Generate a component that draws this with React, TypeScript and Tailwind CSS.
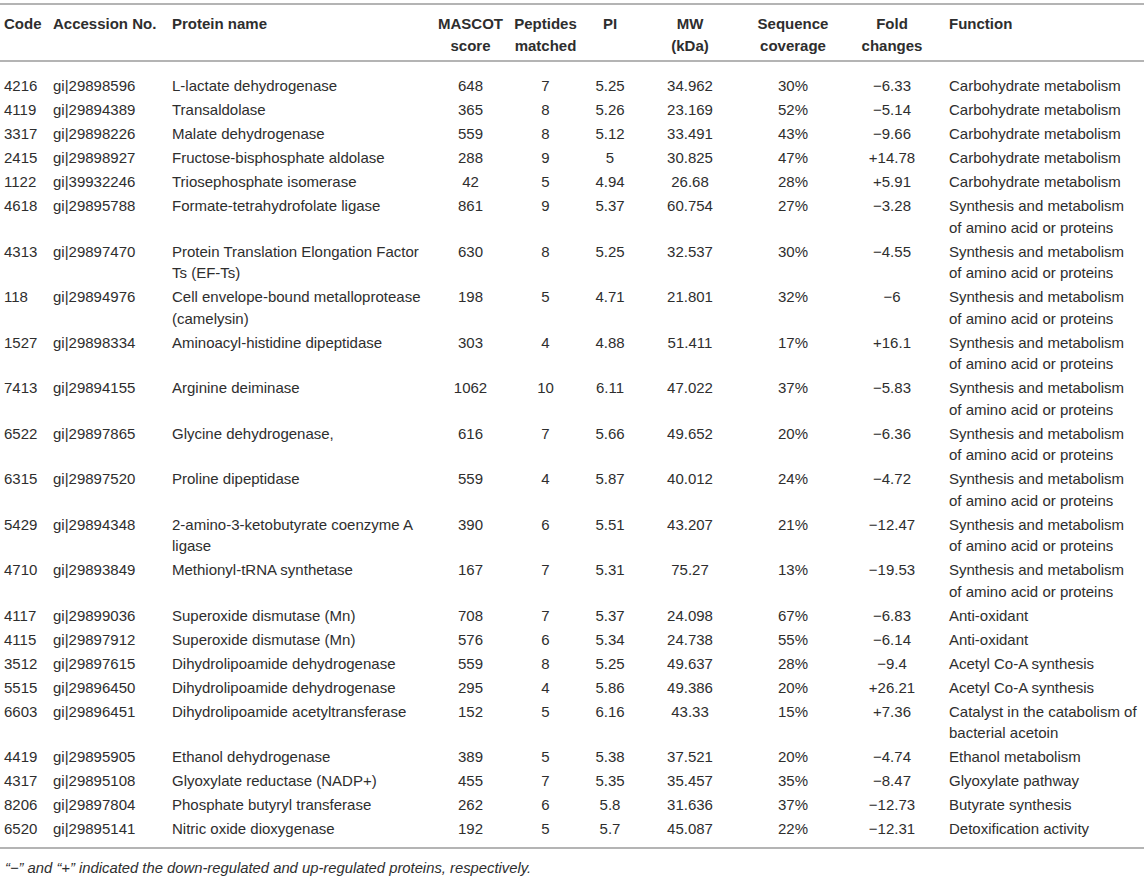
import React from 'react';

type Row = {
  code: string;
  acc: string;
  name: string[];
  score: string;
  peptides: string;
  pi: string;
  mw: string;
  cov: string;
  fold: string;
  fn: string[];
};

const SYN = ['Synthesis and metabolism', 'of amino acid or proteins'];
const CARB = ['Carbohydrate metabolism'];

const rows: Row[] = [
  { code: '4216', acc: 'gi|29898596', name: ['L-lactate dehydrogenase'], score: '648', peptides: '7', pi: '5.25', mw: '34.962', cov: '30%', fold: '\u22126.33', fn: CARB },
  { code: '4119', acc: 'gi|29894389', name: ['Transaldolase'], score: '365', peptides: '8', pi: '5.26', mw: '23.169', cov: '52%', fold: '\u22125.14', fn: CARB },
  { code: '3317', acc: 'gi|29898226', name: ['Malate dehydrogenase'], score: '559', peptides: '8', pi: '5.12', mw: '33.491', cov: '43%', fold: '\u22129.66', fn: CARB },
  { code: '2415', acc: 'gi|29898927', name: ['Fructose-bisphosphate aldolase'], score: '288', peptides: '9', pi: '5', mw: '30.825', cov: '47%', fold: '+14.78', fn: CARB },
  { code: '1122', acc: 'gi|39932246', name: ['Triosephosphate isomerase'], score: '42', peptides: '5', pi: '4.94', mw: '26.68', cov: '28%', fold: '+5.91', fn: CARB },
  { code: '4618', acc: 'gi|29895788', name: ['Formate-tetrahydrofolate ligase'], score: '861', peptides: '9', pi: '5.37', mw: '60.754', cov: '27%', fold: '\u22123.28', fn: SYN },
  { code: '4313', acc: 'gi|29897470', name: ['Protein Translation Elongation Factor', 'Ts (EF-Ts)'], score: '630', peptides: '8', pi: '5.25', mw: '32.537', cov: '30%', fold: '\u22124.55', fn: SYN },
  { code: '118', acc: 'gi|29894976', name: ['Cell envelope-bound metalloprotease', '(camelysin)'], score: '198', peptides: '5', pi: '4.71', mw: '21.801', cov: '32%', fold: '\u22126', fn: SYN },
  { code: '1527', acc: 'gi|29898334', name: ['Aminoacyl-histidine dipeptidase'], score: '303', peptides: '4', pi: '4.88', mw: '51.411', cov: '17%', fold: '+16.1', fn: SYN },
  { code: '7413', acc: 'gi|29894155', name: ['Arginine deiminase'], score: '1062', peptides: '10', pi: '6.11', mw: '47.022', cov: '37%', fold: '\u22125.83', fn: SYN },
  { code: '6522', acc: 'gi|29897865', name: ['Glycine dehydrogenase,'], score: '616', peptides: '7', pi: '5.66', mw: '49.652', cov: '20%', fold: '\u22126.36', fn: SYN },
  { code: '6315', acc: 'gi|29897520', name: ['Proline dipeptidase'], score: '559', peptides: '4', pi: '5.87', mw: '40.012', cov: '24%', fold: '\u22124.72', fn: SYN },
  { code: '5429', acc: 'gi|29894348', name: ['2-amino-3-ketobutyrate coenzyme A', 'ligase'], score: '390', peptides: '6', pi: '5.51', mw: '43.207', cov: '21%', fold: '\u221212.47', fn: SYN },
  { code: '4710', acc: 'gi|29893849', name: ['Methionyl-tRNA synthetase'], score: '167', peptides: '7', pi: '5.31', mw: '75.27', cov: '13%', fold: '\u221219.53', fn: SYN },
  { code: '4117', acc: 'gi|29899036', name: ['Superoxide dismutase (Mn)'], score: '708', peptides: '7', pi: '5.37', mw: '24.098', cov: '67%', fold: '\u22126.83', fn: ['Anti-oxidant'] },
  { code: '4115', acc: 'gi|29897912', name: ['Superoxide dismutase (Mn)'], score: '576', peptides: '6', pi: '5.34', mw: '24.738', cov: '55%', fold: '\u22126.14', fn: ['Anti-oxidant'] },
  { code: '3512', acc: 'gi|29897615', name: ['Dihydrolipoamide dehydrogenase'], score: '559', peptides: '8', pi: '5.25', mw: '49.637', cov: '28%', fold: '\u22129.4', fn: ['Acetyl Co-A synthesis'] },
  { code: '5515', acc: 'gi|29896450', name: ['Dihydrolipoamide dehydrogenase'], score: '295', peptides: '4', pi: '5.86', mw: '49.386', cov: '20%', fold: '+26.21', fn: ['Acetyl Co-A synthesis'] },
  { code: '6603', acc: 'gi|29896451', name: ['Dihydrolipoamide acetyltransferase'], score: '152', peptides: '5', pi: '6.16', mw: '43.33', cov: '15%', fold: '+7.36', fn: ['Catalyst in the catabolism of', 'bacterial acetoin'] },
  { code: '4419', acc: 'gi|29895905', name: ['Ethanol dehydrogenase'], score: '389', peptides: '5', pi: '5.38', mw: '37.521', cov: '20%', fold: '\u22124.74', fn: ['Ethanol metabolism'] },
  { code: '4317', acc: 'gi|29895108', name: ['Glyoxylate reductase (NADP+)'], score: '455', peptides: '7', pi: '5.35', mw: '35.457', cov: '35%', fold: '\u22128.47', fn: ['Glyoxylate pathway'] },
  { code: '8206', acc: 'gi|29897804', name: ['Phosphate butyryl transferase'], score: '262', peptides: '6', pi: '5.8', mw: '31.636', cov: '37%', fold: '\u221212.73', fn: ['Butyrate synthesis'] },
  { code: '6520', acc: 'gi|29895141', name: ['Nitric oxide dioxygenase'], score: '192', peptides: '5', pi: '5.7', mw: '45.087', cov: '22%', fold: '\u221212.31', fn: ['Detoxification activity'] },
];

function Lines({ lines }: { lines: string[] }) {
  return (
    <>
      {lines.map((l, i) => (
        <React.Fragment key={i}>
          {i > 0 && <br />}
          {l}
        </React.Fragment>
      ))}
    </>
  );
}

export default function App() {
  return (
    <div className="w-[1144px] h-[885px] bg-white pt-[3px] font-['Liberation_Sans',Arial,sans-serif] text-[#2e2e2e] overflow-hidden">
      <table className="w-[1144px] table-fixed border-collapse text-[15px] leading-[21.5px]">
        <colgroup>
          <col className="w-[48px]" />
          <col className="w-[119px]" />
          <col className="w-[266px]" />
          <col className="w-[75px]" />
          <col className="w-[75px]" />
          <col className="w-[54px]" />
          <col className="w-[106px]" />
          <col className="w-[100px]" />
          <col className="w-[98px]" />
          <col className="w-[203px]" />
        </colgroup>
        <thead>
          <tr className="border-t-2 border-b-2 border-[#b4b4b4] align-top font-bold">
            <th className="pl-[4px] pt-[8px] pb-[4px] text-left whitespace-nowrap">Code</th>
            <th className="pl-[5px] pt-[8px] pb-[4px] text-left whitespace-nowrap">Accession No.</th>
            <th className="pl-[5px] pt-[8px] pb-[4px] text-left whitespace-nowrap">Protein name</th>
            <th className="pt-[8px] pb-[4px] text-center whitespace-nowrap">MASCOT<br />score</th>
            <th className="pt-[8px] pb-[4px] text-center whitespace-nowrap">Peptides<br />matched</th>
            <th className="pt-[8px] pb-[4px] text-center whitespace-nowrap">PI</th>
            <th className="pt-[8px] pb-[4px] text-center whitespace-nowrap">MW<br />(kDa)</th>
            <th className="pt-[8px] pb-[4px] text-center whitespace-nowrap">Sequence<br />coverage</th>
            <th className="pt-[8px] pb-[4px] text-center whitespace-nowrap">Fold<br />changes</th>
            <th className="pl-[8px] pt-[8px] pb-[4px] text-left whitespace-nowrap">Function</th>
          </tr>
        </thead>
        <tbody className="border-b-2 border-[#b4b4b4]">
          {rows.map((r, i) => {
            const first = i === 0;
            const last = i === rows.length - 1;
            const py = `${first ? 'pt-[13px]' : 'pt-[1.25px]'} ${last ? 'pb-[7px]' : 'pb-[1.25px]'}`;
            return (
              <tr key={r.code + r.acc} className="align-top">
                <td className={`pl-[4px] whitespace-nowrap ${py}`}>{r.code}</td>
                <td className={`pl-[5px] whitespace-nowrap ${py}`}>{r.acc}</td>
                <td className={`pl-[5px] whitespace-nowrap ${py}`}><Lines lines={r.name} /></td>
                <td className={`text-center whitespace-nowrap ${py}`}>{r.score}</td>
                <td className={`text-center whitespace-nowrap ${py}`}>{r.peptides}</td>
                <td className={`text-center whitespace-nowrap ${py}`}>{r.pi}</td>
                <td className={`text-center whitespace-nowrap ${py}`}>{r.mw}</td>
                <td className={`text-center whitespace-nowrap ${py}`}>{r.cov}</td>
                <td className={`text-center whitespace-nowrap ${py}`}>{r.fold}</td>
                <td className={`pl-[8px] whitespace-nowrap ${py}`}><Lines lines={r.fn} /></td>
              </tr>
            );
          })}
        </tbody>
      </table>
      <p className="mt-[9px] pl-[5px] text-[14.8px] leading-[20px] italic">
        {'\u201c\u2212\u201d and \u201c+\u201d indicated the down-regulated and up-regulated proteins, respectively.'}
      </p>
    </div>
  );
}
